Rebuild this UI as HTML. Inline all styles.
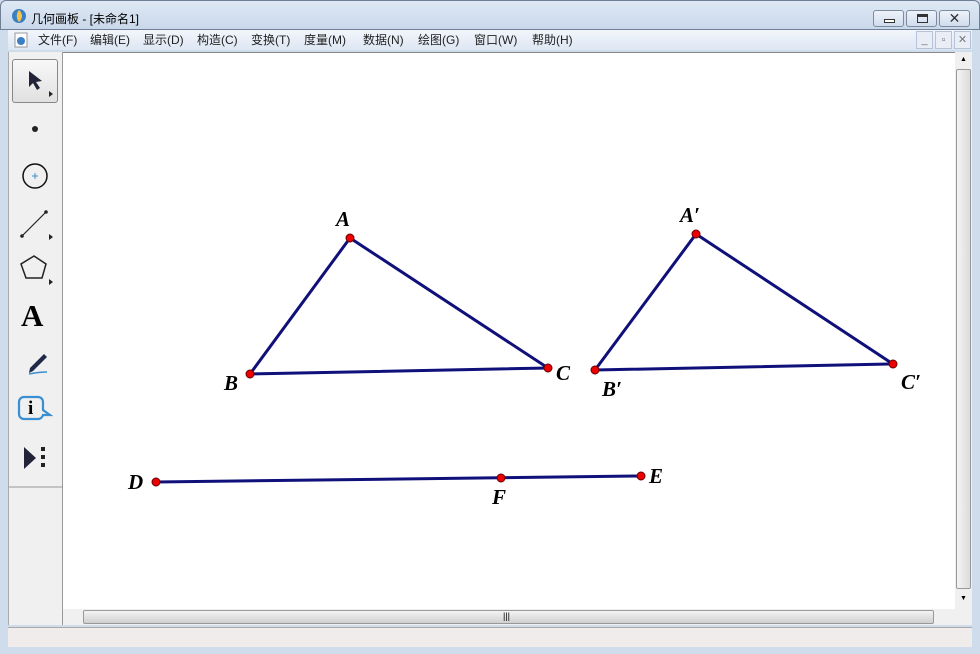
<!DOCTYPE html>
<html><head><meta charset="utf-8"><style>
*{margin:0;padding:0;box-sizing:border-box}
body{width:980px;height:654px;overflow:hidden;background:#cfdcec;font-family:"Liberation Sans","Noto Sans CJK SC",sans-serif;position:relative}
.abs{position:absolute}
.title{left:0;top:0;width:980px;height:30px;background:linear-gradient(#dfe9f5,#c9d8ea);border-radius:6px 6px 0 0;border:1px solid #6f7f95}
.title span{position:absolute;left:30px;top:9px;font-size:12px;color:#000}
.menu{left:8px;top:30px;width:964px;height:20px;background:linear-gradient(#f3f6fb,#dde6f3)}
.menu span{position:absolute;top:1px;font-size:12px;color:#222}
.wbtn{top:10px;height:17px;border:1px solid #7d8aa0;border-radius:3px;background:linear-gradient(#eef3fa,#d0dcec)}
.mbtn{top:31px;width:17px;height:18px;border:1px solid #b6c3d6;background:#e9eef6;font-size:11px;color:#777;text-align:center;line-height:16px}
.tools{left:8px;top:52px;width:55px;height:573px;background:#f0f0f0;border-right:1px solid #999;border-left:1px solid #aaa}
.canvas{left:63px;top:52px;width:892px;height:557px;background:#fff;border-top:1px solid #888}
.vs{left:955px;top:52px;width:17px;height:557px;background:#f0f0f0}
.hs{left:63px;top:609px;width:909px;height:16px;background:#f0f0f0}
.status{left:8px;top:627px;width:964px;height:20px;background:#f0eceb;border-top:1px solid #aaa}
.lbl{position:absolute;font-family:"Liberation Serif",serif;font-style:italic;font-weight:bold;font-size:21px;color:#000}
</style></head><body>
<div class="abs title"><svg class="abs" style="left:10px;top:7px" width="16" height="16"><circle cx="8" cy="8" r="7" fill="#3b7fc4"/><path d="M8 2 C12 5 12 11 8 14 C5 11 5 5 8 2Z" fill="#f5c24a"/></svg><span>几何画板 - [未命名1]</span></div>
<div class="abs wbtn" style="left:873px;width:31px"><div class="abs" style="left:10px;top:8px;width:11px;height:4px;border:1px solid #333;background:#fff"></div></div>
<div class="abs wbtn" style="left:906px;width:31px"><div class="abs" style="left:10px;top:3px;width:11px;height:9px;border:1px solid #333;border-top-width:3px"></div></div>
<div class="abs wbtn" style="left:939px;width:31px;text-align:center;font-size:14px;line-height:15px;color:#333">✕</div>
<div class="abs menu">
<svg class="abs" style="left:6px;top:2px" width="14" height="16"><rect x="1" y="1" width="12" height="14" fill="#fff" stroke="#999"/><circle cx="7" cy="9" r="4" fill="#3b7fc4"/></svg>
<span style="left:30px">文件(F)</span><span style="left:82px">编辑(E)</span><span style="left:135px">显示(D)</span><span style="left:189px">构造(C)</span><span style="left:243px">变换(T)</span><span style="left:296px">度量(M)</span><span style="left:355px">数据(N)</span><span style="left:410px">绘图(G)</span><span style="left:466px">窗口(W)</span><span style="left:524px">帮助(H)</span>
</div>
<div class="abs mbtn" style="left:916px">_</div><div class="abs mbtn" style="left:935px">▫</div><div class="abs mbtn" style="left:954px">✕</div>
<div class="abs tools">
<div class="abs" style="left:3px;top:7px;width:46px;height:44px;border:1px solid #888;border-radius:3px;background:linear-gradient(#f8f8f8,#e0e0e0)"></div>
<svg class="abs" style="left:0;top:0" width="55" height="440">
<path d="M20 19 L20 35 L24 31 L28 38 L31 36 L27 30 L33 29Z" fill="#222238"/><path d="M40 39 L44 42 L40 45Z" fill="#222"/>
<circle cx="26" cy="77" r="3" fill="#222"/>
<circle cx="26" cy="124" r="12" fill="none" stroke="#111" stroke-width="1.5"/><path d="M23 124h6M26 121v6" stroke="#3a8fd0"/>
<path d="M13 184 L37 160" stroke="#222" stroke-width="1.2"/><circle cx="13" cy="184" r="1.8" fill="#222"/><circle cx="37" cy="160" r="1.8" fill="#222"/><path d="M40 182 L44 185 L40 188Z" fill="#222"/>
<path d="M25 204 L37 212 L33 226 L17 226 L12 212Z" fill="none" stroke="#222" stroke-width="1.5"/><path d="M40 227 L44 230 L40 233Z" fill="#222"/>
<path d="M21 316 L35 302 L38 305 L24 319 L20 321Z" fill="#1f2a48"/><path d="M20 322 Q30 320 38 320" stroke="#3a8fd0" stroke-width="1.5" fill="none"/>
<path d="M15 345 h14 a5 5 0 0 1 5 5 v8 l7 5 h-7 a5 5 0 0 1 -5 4 h-14 a5 5 0 0 1 -5 -5 v-12 a5 5 0 0 1 5 -5Z" fill="none" stroke="#3a8fd0" stroke-width="2.2"/>
<path d="M15 395 L15 417 L27 406Z" fill="#222238"/><rect x="32" y="395" width="4" height="4" fill="#222"/><rect x="32" y="403" width="4" height="4" fill="#222"/><rect x="32" y="411" width="4" height="4" fill="#222"/>
<line x1="0" y1="435" x2="55" y2="435" stroke="#999"/>
</svg>
<div class="abs" style="left:12px;top:246px;font-family:'Liberation Serif',serif;font-weight:bold;font-size:31px">A</div>
<div class="abs" style="left:19px;top:346px;font-family:'Liberation Serif',serif;font-weight:bold;font-size:19px">i</div>
</div>
<div class="abs canvas"></div>
<div class="abs vs"><div class="abs" style="left:1px;top:17px;width:15px;height:520px;border:1px solid #999;border-radius:2px;background:linear-gradient(90deg,#f4f4f4,#dcdcdc)"></div><div class="abs" style="left:5px;top:4px;font-size:7px">▲</div><div class="abs" style="left:5px;top:543px;font-size:7px">▼</div></div>
<div class="abs hs"><div class="abs" style="left:20px;top:1px;width:851px;height:14px;border:1px solid #999;border-radius:2px;background:linear-gradient(#f4f4f4,#cfcfcf)"></div><div class="abs" style="left:440px;top:2px;font-size:9px">|||</div></div>
<div class="abs status"></div>
<svg class="abs" style="left:0;top:0" width="980" height="654">
<g stroke="#10107a" stroke-width="3" fill="none" stroke-linejoin="round">
<path d="M350 238 L250 374 L548 368 Z"/><path d="M696 234 L595 370 L893 364 Z"/><path d="M156 482 L641 476"/></g>
<g fill="#e00" stroke="#600" stroke-width="1">
<circle cx="350" cy="238" r="4"/><circle cx="250" cy="374" r="4"/><circle cx="548" cy="368" r="4"/>
<circle cx="696" cy="234" r="4"/><circle cx="595" cy="370" r="4"/><circle cx="893" cy="364" r="4"/>
<circle cx="156" cy="482" r="4"/><circle cx="501" cy="478" r="4"/><circle cx="641" cy="476" r="4"/></g>
</svg>
<div class="lbl" style="left:336px;top:207px">A</div>
<div class="lbl" style="left:224px;top:371px">B</div>
<div class="lbl" style="left:556px;top:361px">C</div>
<div class="lbl" style="left:680px;top:203px">A′</div>
<div class="lbl" style="left:602px;top:377px">B′</div>
<div class="lbl" style="left:901px;top:370px">C′</div>
<div class="lbl" style="left:128px;top:470px">D</div>
<div class="lbl" style="left:649px;top:464px">E</div>
<div class="lbl" style="left:492px;top:485px">F</div>
</body></html>
